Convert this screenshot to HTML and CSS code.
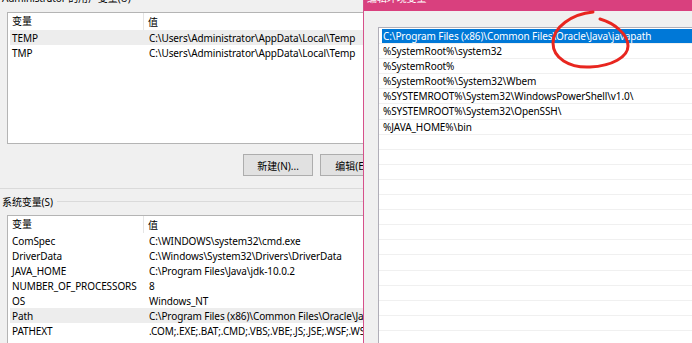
FILE: index.html
```html
<!DOCTYPE html>
<html lang="zh-CN">
<head>
  <meta charset="UTF-8" />
  <title>环境变量</title>
  <link rel="stylesheet" href="styles.css">
</head>
<body>
  <div class="screen">

    <div class="env">
      <div class="env-inner">
        <div class="caption">Administrator 的用户变量(U)</div>

        <div class="listview user">
          <div class="lv-head"><span class="c1">变量</span><span class="c2">值</span></div>
          <div class="lv-row hot"><span class="c1">TEMP</span><span class="c2">C:\Users\Administrator\AppData\Local\Temp</span></div>
          <div class="lv-row"><span class="c1">TMP</span><span class="c2">C:\Users\Administrator\AppData\Local\Temp</span></div>
        </div>

        <div class="buttons">
          <button class="btn">新建(N)...</button>
          <button class="btn">编辑(E)...</button>
        </div>

        <div class="sep"></div>
        <div class="group">系统变量(S)</div>

        <div class="listview sys">
          <div class="lv-head"><span class="c1">变量</span><span class="c2">值</span></div>
          <div class="lv-row"><span class="c1">ComSpec</span><span class="c2">C:\WINDOWS\system32\cmd.exe</span></div>
          <div class="lv-row"><span class="c1">DriverData</span><span class="c2">C:\Windows\System32\Drivers\DriverData</span></div>
          <div class="lv-row"><span class="c1">JAVA_HOME</span><span class="c2">C:\Program Files\Java\jdk-10.0.2</span></div>
          <div class="lv-row"><span class="c1">NUMBER_OF_PROCESSORS</span><span class="c2">8</span></div>
          <div class="lv-row"><span class="c1">OS</span><span class="c2">Windows_NT</span></div>
          <div class="lv-row hot"><span class="c1">Path</span><span class="c2">C:\Program Files (x86)\Common Files\Oracle\Java\javapath;C:\WINDOWS\system32</span></div>
          <div class="lv-row"><span class="c1">PATHEXT</span><span class="c2">.COM;.EXE;.BAT;.CMD;.VBS;.VBE;.JS;.JSE;.WSF;.WSH;.MSC</span></div>
        </div>
      </div>
    </div>

    <div class="edit">
      <div class="titlebar"><span>编辑环境变量</span></div>
      <div class="edit-body">
        <div class="pathlist">
          <div class="prow sel"><span class="t">C:\Program Files (x86)\Common Files\Oracle\Java\javapath</span></div>
          <div class="prow"><span class="t">%SystemRoot%\system32</span></div>
          <div class="prow"><span class="t">%SystemRoot%</span></div>
          <div class="prow"><span class="t">%SystemRoot%\System32\Wbem</span></div>
          <div class="prow"><span class="t">%SYSTEMROOT%\System32\WindowsPowerShell\v1.0\</span></div>
          <div class="prow"><span class="t">%SYSTEMROOT%\System32\OpenSSH\</span></div>
          <div class="prow"><span class="t">%JAVA_HOME%\bin</span></div>
          <div class="prow"></div>
          <div class="prow"></div>
          <div class="prow"></div>
          <div class="prow"></div>
          <div class="prow"></div>
          <div class="prow"></div>
          <div class="prow"></div>
          <div class="prow"></div>
          <div class="prow"></div>
          <div class="prow"></div>
          <div class="prow"></div>
          <div class="prow"></div>
          <div class="prow"></div>
          <div class="prow"></div>
        </div>
      </div>
    </div>

    <!-- hand-drawn red mark over the screenshot -->
    <svg class="mark" width="692" height="343" viewBox="0 0 692 343">
      <path d="M593 12 C572 14 553 27 553 43 C553 58 569 68 590 67 C612 66 628 57 628 46 C628 34 614 23 600 19"
            fill="none" stroke="#e8261f" stroke-width="3" stroke-linecap="round" stroke-linejoin="round"/>
    </svg>

  </div>
</body>
</html>
```

FILE: styles.css
```css
* {
  box-sizing: border-box;
}

body {
  margin: 0;
  background: #f0f0f0;
  color: #000;
  font-family: "Noto Sans", "Noto Sans CJK SC", sans-serif;
  font-size: 10px;
  letter-spacing: -0.1px;
  overflow: hidden;
}

.screen {
  position: relative;
  display: flex;
  height: 343px;
  overflow: hidden;
}

/* left: environment variables window */
.env {
  flex: none;
  width: 363px;
  overflow: hidden;
}

.env-inner {
  width: 520px;
}

.caption {
  line-height: 16px;
  margin-top: -10px;
  padding-left: 2px;
  white-space: nowrap;
}

.listview {
  margin: 6px 0 0 7px;
  width: 500px;
  padding: 0 2px;
  background: #fff;
  border: 1px solid #b4b4b4;
}

.listview.user {
  height: 132px;
}

.listview.sys {
  height: 200px;
}

.lv-head,
.lv-row {
  display: flex;
  align-items: center;
  padding-left: 2px;
  white-space: nowrap;
}

.lv-head {
  height: 17px;
}

.lv-head .c1 {
  width: 132px;
  height: 17px;
  line-height: 17px;
  border-right: 1px solid #e5e5e5;
}

.lv-head .c2 {
  padding-left: 4px;
}

.lv-row {
  height: 15px;
}

.lv-row .c1 {
  flex: none;
  width: 137px;
}

.lv-row.hot {
  background: #ededed;
}

.buttons {
  display: flex;
  gap: 7px;
  margin-top: 10px;
  padding-left: 243px;
}

.btn {
  width: 70px;
  height: 22px;
  padding: 0;
  font: inherit;
  color: #000;
  background: #e1e1e1;
  border: 1px solid #adadad;
}

.sep {
  margin-top: 12px;
  height: 1px;
  background: #dadada;
}

.group {
  display: flex;
  align-items: center;
  height: 16px;
  margin-top: 4px;
  padding-left: 2px;
  white-space: nowrap;
}

.group::after {
  content: "";
  flex: 1;
  height: 1px;
  margin-left: 4px;
  background: #dadada;
}

/* right: edit environment variable dialog */
.edit {
  flex: 1;
  min-width: 0;
  background: #f0f0f0;
  border-left: 1px solid #d6508a;
}

.titlebar {
  height: 11px;
  padding-left: 3px;
  overflow: hidden;
  color: #fff;
  background: #d9407e;
}

.titlebar span {
  display: block;
  line-height: 16px;
  margin-top: -10px;
}

.edit-body {
  padding: 16px 0 0 14px;
}

.pathlist {
  height: 400px;
  padding-top: 1px;
  background: #fff;
  border-top: 1px solid #b0aeb8;
  border-left: 1px solid #b0aeb8;
}

.prow {
  height: 15.1px;
  border-bottom: 1px solid #f0f0f0;
  white-space: nowrap;
}

.prow .t {
  display: block;
  height: 14px;
  line-height: 14px;
  margin-left: 3px;
  padding-left: 1px;
}

.prow.sel .t {
  color: #fff;
  background: #0078d7;
}

.mark {
  position: absolute;
  left: 0;
  top: 0;
  pointer-events: none;
}
```
